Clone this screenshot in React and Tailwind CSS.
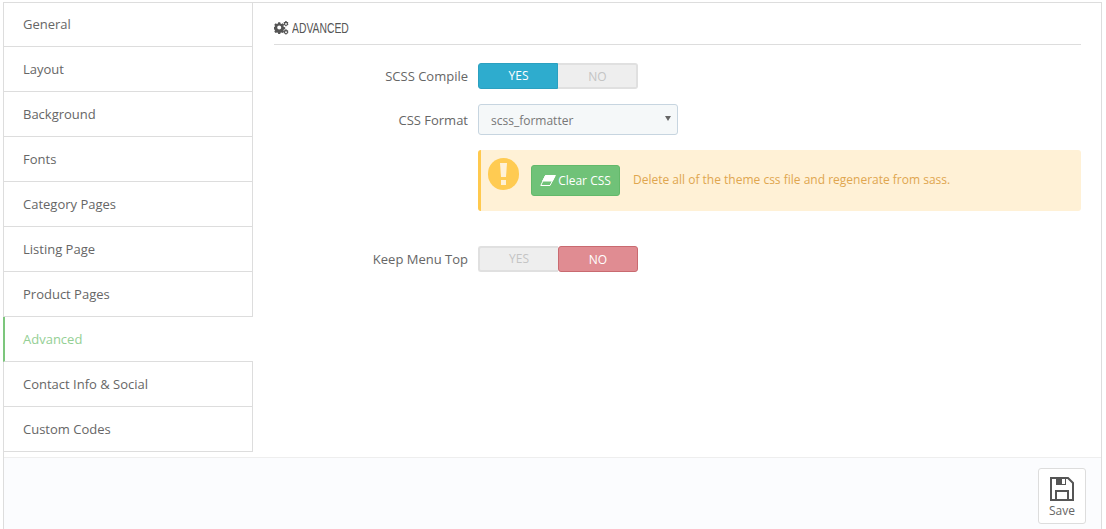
import React from "react";

const tabs = ["General","Layout","Background","Fonts","Category Pages","Listing Page","Product Pages","Advanced","Contact Info & Social","Custom Codes"];

function Toggle({ on }) {
  return (
    <div className="flex h-[26px] w-[160px] text-[12px] font-medium">
      {on ? (
        <>
          <div className="flex w-[80px] items-center justify-center rounded-l-[3px] border border-[#2ba0c0] bg-[#2eacce] pl-[1px] text-white">YES</div>
          <div className="flex w-[80px] items-center justify-center rounded-r-[3px] border-2 border-l-0 border-[#e0e0e0] bg-[#eeeeee] pl-[1px] pt-[1px] text-[#c4c4c4]">NO</div>
        </>
      ) : (
        <>
          <div className="flex w-[80px] items-center justify-center rounded-l-[3px] border-2 border-r-0 border-[#e0e0e0] bg-[#eeeeee] text-[#c4c4c4]">YES</div>
          <div className="flex w-[80px] items-center justify-center rounded-[3px] border border-[#c96a70] bg-[#e08c92] pt-[1px] text-white">NO</div>
        </>
      )}
    </div>
  );
}

function Row({ label, children, className }) {
  return (
    <div className={"flex items-center " + className}>
      <div className="mr-[10px] w-[194px] pt-[2px] text-right text-[13px] text-[#666666]">{label}</div>
      {children}
    </div>
  );
}

export default function App() {
  return (
    <div className="h-[529px] w-[1106px] overflow-hidden bg-white pl-[3px] pr-[4px] pt-[2px] font-['Open_Sans','Noto_Sans',sans-serif] text-[13px]">
      <div className="flex h-[527px] flex-col border-x border-t border-[#dddddd]">
        <div className="flex h-[454px] shrink-0">
          <div className="-mt-[1px] w-[249px] shrink-0">
            {tabs.map((t) => {
              const active = t === "Advanced";
              return (
                <div
                  key={t}
                  className={
                    "flex h-[45px] items-center border-b pt-[2px] text-[13px] " +
                    (active
                      ? "-ml-[1px] border-l-2 border-b-[#dddddd] border-l-[#7cc67c] pl-[18px] text-[#94cf94]"
                      : "border-r border-[#dddddd] pl-[19px] text-[#666666]")
                  }
                >
                  {t}
                </div>
              );
            })}
          </div>
          <div className="min-w-0 flex-1 pl-[21px] pr-[20px]">
            <div className="flex h-[42px] items-center gap-[2px] border-b border-[#dddddd] pt-[9px] text-[#555555]">
              <svg width="16" height="14" viewBox="0 0 16 14" fill="#555555" className="shrink-0">
                <path fillRule="evenodd" d="M4.200 3.200h2l.3 1.300 1 .5 1.200-.7 1.400 1.400-.7 1.200.5 1 1.300.3v2l-1.300.3-.5 1 .7 1.200-1.400 1.400-1.200-.7-1 .4-.3 1.200h-2l-.3-1.200-1-.4-1.200.7-1.400-1.400.7-1.200-.5-1-1.300-.3v-2l1.300-.3.5-1-.7-1.200 1.400-1.400 1.200.7 1-.5zM5.200 6.500a2 2 0 1 0 0 4 2 2 0 0 0 0-4z" transform="translate(0 -2)" />
                <path fillRule="evenodd" d="M12.500 0l.4 1 1-.1.5 1.100-.7.6.7.7-.5 1-1-.1-.4 1h-1.100l-.4-1-1 .1-.5-1 .7-.7-.7-.7.5-1 1 .1.4-1zM12 2a.9.9 0 1 0 0 1.800.9.9 0 0 0 0-1.800z" />
                <path fillRule="evenodd" d="M12.500 8.300l.4 1 1-.1.5 1.100-.7.6.7.7-.5 1-1-.1-.4 1h-1.100l-.4-1-1 .1-.5-1 .7-.7-.7-.7.5-1 1 .1.4-1zM12 10.300a.9.9 0 1 0 0 1.800.9.9 0 0 0 0-1.800z" />
              </svg>
              <span className="inline-block origin-left scale-x-[0.74] font-['Liberation_Sans',sans-serif] text-[14px] leading-none">ADVANCED</span>
            </div>

            <Row label="SCSS Compile" className="mt-[18px]">
              <Toggle on />
            </Row>
            <Row label="CSS Format" className="mt-[15px]">
              <div className="relative flex h-[31px] w-[200px] items-center rounded-[3px] border border-[#c7d5e0] bg-[#f5f8f9] pl-[12px] pt-[2px] text-[12px] text-[#777777]">
                scss_formatter
                <span className="absolute right-[6px] top-[11px] h-0 w-0 border-x-[3px] border-t-[5px] border-x-transparent border-t-[#666666]" />
              </div>
            </Row>
            <div className="ml-[204px] mt-[15px] flex h-[61px] rounded-[3px] border-l-[3px] border-[#ffc94d] bg-[#fff1d6]">
              <div className="ml-[7px] mt-[8px] flex h-[32px] w-[31px] items-center justify-center rounded-full bg-[#ffcb52]">
                <svg width="7" height="22" viewBox="0 0 7 22" fill="#fff1d6">
                  <path d="M0 0H7L6 14H1Z" />
                  <rect x="1" y="17" width="5" height="5" />
                </svg>
              </div>
              <div className="ml-[12px] mt-[15px] flex h-[31px] w-[89px] items-center justify-center gap-[2px] rounded-[3px] border border-[#63b96a] bg-[#70c278] text-[12px] text-white">
                <svg width="16" height="11" viewBox="0 0 16 11" fill="none" stroke="white" className="shrink-0">
                  <path d="M5.500 0.500H15.200L10 10.500H0.800Z" strokeWidth="1" />
                  <path d="M5.500 0.500H15.200L12.400 6H2.700Z" fill="white" />
                </svg>
                Clear CSS
              </div>
              <div className="ml-[13px] mt-[21px] text-[12px] leading-[18px] text-[#e0a64f]">
                Delete all of the theme css file and regenerate from sass.
              </div>
            </div>
            <Row label="Keep Menu Top" className="mt-[35px]">
              <Toggle />
            </Row>
          </div>
        </div>
        <div className="flex flex-1 justify-end border-t border-[#eeeeee] bg-[#fbfcfe] pr-[15px] pt-[10px]">
          <div className="flex h-[56px] w-[48px] flex-col items-center rounded-[3px] border border-[#dddddd] bg-white pt-[8px] text-[12px] leading-[16px] text-[#666666]">
            <svg width="24" height="24" viewBox="0 0 24 24" fill="none" stroke="#555555" strokeWidth="2">
              <path d="M1 1H18L23 6V23H1Z" />
              <path d="M6 23V14H18V23" />
              <path d="M6 1H16V8H6Z" fill="#555555" stroke="none" />
              <rect x="12" y="2" width="3" height="5" fill="white" stroke="none" />
            </svg>
            <span className="mt-[2px]">Save</span>
          </div>
        </div>
      </div>
    </div>
  );
}
